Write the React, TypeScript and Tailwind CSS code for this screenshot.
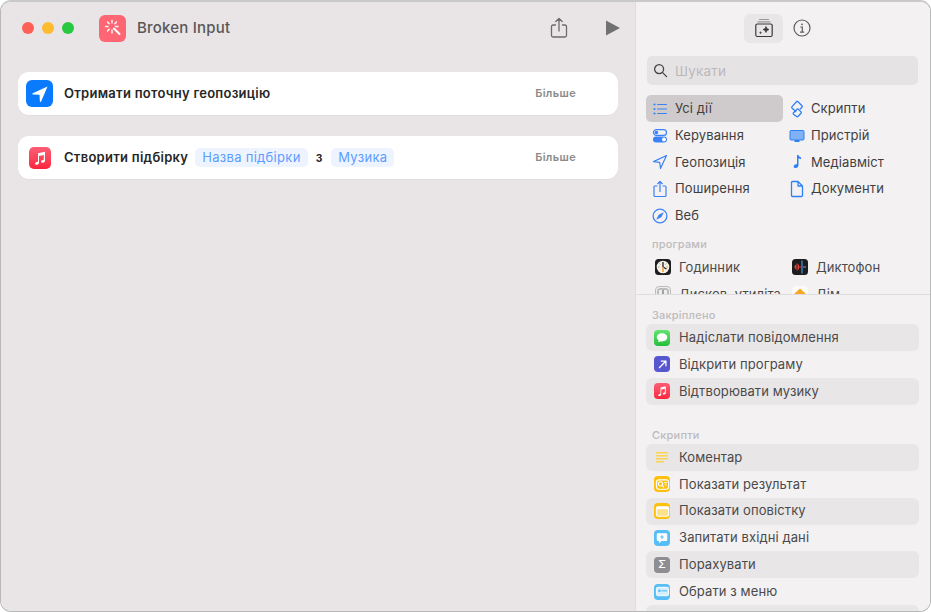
import React from "react";

const Arrow = ({ className = "", fill = "white" }: { className?: string; fill?: string }) => (
  <svg viewBox="0 0 16 16" className={className}><path d="M14 2 2.200 7.400c-.5.300-.4 1 .2 1L7.600 8.600l.3 5.200c0 .6.7.7 1 .2L14 2Z" fill={fill} /></svg>
);
const Note = ({ className = "", fill = "white" }: { className?: string; fill?: string }) => (
  <svg viewBox="0 0 16 16" className={className}><path d="M6 3.200 13 1.800v8.900c0 1.100-.8 1.800-2 2-1.100.2-1.900-.3-1.900-1.200 0-.9.7-1.400 1.800-1.600l.9-.2V4.900L7 5.900v6.800c0 1.100-.8 1.800-2 2-1.100.2-1.900-.3-1.900-1.200 0-.9.7-1.400 1.800-1.600l1.100-.2V3.200Z" fill={fill} /></svg>
);
const blue = "#3b82f6";

const cats: [string, React.ReactNode, string, React.ReactNode][] = [
  ["Усі дії",
    <svg viewBox="0 0 16 16" className="w-[16px] h-[16px]"><g fill={blue}><circle cx="2.500" cy="3.500" r="1.100"/><circle cx="2.500" cy="8" r="1.100"/><circle cx="2.500" cy="12.500" r="1.100"/><rect x="5" y="2.900" width="10" height="1.200" rx=".6"/><rect x="5" y="7.400" width="10" height="1.200" rx=".6"/><rect x="5" y="11.900" width="10" height="1.200" rx=".6"/></g></svg>,
    "Скрипти",
    <svg viewBox="0 0 16 18" className="w-[16px] h-[18px]" fill="none" stroke="#2f80f5" strokeWidth="1.300" strokeLinejoin="round"><path d="M8.200 1 3 6.600c-.4.400-.4 1 0 1.400l4.200 4M8.200 1l4.800 4.800c.4.400.4 1 0 1.400L11 9.200"/><path d="M4.500 12.800 8 9.300c.4-.4 1-.4 1.400 0l2.600 2.600c.4.400.4 1 0 1.400L9 16.500c-.4.400-1 .4-1.400 0l-3.100-2.300c-.4-.4-.4-1 0-1.400Z"/></svg>],
  ["Керування",
    <svg viewBox="0 0 16 16" className="w-[16px] h-[16px]"><rect x="1.500" y="1.600" width="13" height="5.800" rx="2.900" fill="none" stroke={blue} strokeWidth="1.200"/><circle cx="4.400" cy="4.500" r="1.800" fill={blue}/><rect x="1" y="8.600" width="14" height="6" rx="3" fill={blue}/><circle cx="12" cy="11.600" r="2" fill="white"/></svg>,
    "Пристрій",
    <svg viewBox="0 0 16 16" className="w-[16px] h-[16px]"><rect x="1" y="2.500" width="14" height="9.500" rx="1" fill="#7fb2f5" stroke="#2f80f5"/><rect x="5.500" y="12" width="5" height="2" fill="#2f80f5"/></svg>],
  ["Геопозиція",
    <svg viewBox="0 0 16 16" className="w-[16px] h-[16px]" fill="none" stroke={blue} strokeWidth="1.200" strokeLinejoin="round"><path d="M14.500 1.500 1.500 7.600l6.200.7.800 6.200 6-13Z"/></svg>,
    "Медіавміст",
    <svg viewBox="0 0 16 16" className="w-[16px] h-[16px]"><path d="M8 1h1.500c.3 1.500 1.200 2 2.500 2.200v1.800c-1 0-1.900-.3-2.500-.8v7.100c0 1.500-1.200 2.700-2.900 2.700-1.100 0-1.900-.7-1.900-1.600 0-1.200 1-2 2.600-2.200l.7-.1V1Z" fill="#2f80f5"/></svg>],
  ["Поширення",
    <svg viewBox="0 0 16 18" className="w-[16px] h-[18px]" fill="none" stroke={blue} strokeWidth="1.200" strokeLinecap="round" strokeLinejoin="round"><path d="M5 6H3a1 1 0 0 0-1 1v8.500a1 1 0 0 0 1 1h10a1 1 0 0 0 1-1V7a1 1 0 0 0-1-1h-2M8 11.500V1.500M5.700 3.700 8 1.500l2.300 2.200"/></svg>,
    "Документи",
    <svg viewBox="0 0 16 18" className="w-[16px] h-[18px]" fill="none" stroke="#2f80f5" strokeWidth="1.300" strokeLinejoin="round"><path d="M2.500 2.500a1 1 0 0 1 1-1h5.500l4.500 4.500v9.500a1 1 0 0 1-1 1h-9a1 1 0 0 1-1-1v-13.500ZM9 1.500v4.500h4.500"/></svg>],
  ["Веб",
    <svg viewBox="0 0 16 16" className="w-[16px] h-[16px]"><circle cx="8" cy="8" r="6.900" fill="none" stroke={blue} strokeWidth="1.300"/><path d="M11.800 4.200 9.300 9.300 4.200 11.800 6.700 6.700Z" fill={blue}/></svg>,
    "", null],
];

const Tile = ({ bg, children }: { bg: string; children: React.ReactNode }) => (
  <span className={`w-[16px] h-[16px] rounded-[4px] flex items-center justify-center shrink-0 ${bg}`}>{children}</span>
);

const IconMsg = <span className="w-[16px] h-[16px] rounded-[4px] flex items-center justify-center shrink-0 bg-gradient-to-b from-[#62e36c] to-[#1fbf3a]"><svg viewBox="0 0 16 16" className="w-[14px] h-[14px]"><path d="M8 2.500c3.400 0 6 2 6 4.700s-2.600 4.700-6 4.700c-.6 0-1.200 0-1.700-.2-.9.7-2 1-3 1 .6-.6 1-1.300 1-2C2.900 10 2 8.700 2 7.200 2 4.500 4.600 2.500 8 2.500Z" fill="white"/></svg></span>;
const IconOpen = <Tile bg="bg-[#5756ce]"><svg viewBox="0 0 16 16" className="w-[11px] h-[11px]" fill="none" stroke="white" strokeWidth="1.800"><path d="M3 13 13 3M5.500 3H13v7.500"/></svg></Tile>;
const IconMusic = <span className="w-[16px] h-[16px] rounded-[4px] flex items-center justify-center shrink-0 bg-gradient-to-b from-[#fb5c74] to-[#fa233b]"><Note className="w-[12px] h-[12px]" /></span>;
const IconComment = <span className="w-[16px] h-[16px] flex items-center justify-center shrink-0"><svg viewBox="0 0 16 16" className="w-[16px] h-[16px]"><g fill="#fcd34d"><rect x="2" y="2" width="12" height="1.500"/><rect x="2" y="5" width="12" height="1.500"/><rect x="2" y="8" width="12" height="1.500"/><rect x="2" y="11" width="8" height="1.500"/></g></svg></span>;
const IconResult = <Tile bg="bg-[#fdc00d]"><svg viewBox="0 0 16 16" className="w-[15px] h-[15px]" fill="none" stroke="white" strokeWidth="1.200"><rect x="1.500" y="3" width="13" height="10" rx="2.500"/><circle cx="5.800" cy="7.300" r="2.300"/><path d="M7.500 9 9.500 11M10 6h2.500M10.500 8.500h2"/></svg></Tile>;
const IconAlert = <Tile bg="bg-[#fdc00d]"><svg viewBox="0 0 16 16" className="w-[15px] h-[15px]"><rect x="1.500" y="3" width="13" height="10" rx="1.500" fill="#fde28a" stroke="white" strokeWidth="1.200"/><rect x="1.500" y="3" width="13" height="2.500" fill="white"/></svg></Tile>;
const IconAsk = <Tile bg="bg-[#56bdf5]"><svg viewBox="0 0 16 16" className="w-[14px] h-[14px]"><path d="M3.500 2.500h9a1.500 1.500 0 0 1 1.500 1.500v6a1.500 1.500 0 0 1-1.500 1.500H7.500L4.500 14v-2.500h-1A1.500 1.500 0 0 1 2 10V4a1.500 1.500 0 0 1 1.500-1.500Z" fill="white"/><path d="M8 4.800v4M6 6.800h4" stroke="#56bdf5" strokeWidth="1.200"/></svg></Tile>;
const IconCalc = <Tile bg="bg-[#8e8d92]"><span className="text-white text-[11px] leading-none font-medium">Σ</span></Tile>;
const IconMenu = <Tile bg="bg-[#56bdf5]"><svg viewBox="0 0 16 16" className="w-[15px] h-[15px]"><rect x="1.500" y="3.500" width="13" height="9" rx="1.500" fill="#d5efff" stroke="white"/><rect x="3.500" y="6" width="2.500" height="2.500" fill="#56bdf5"/><rect x="7" y="6.700" width="6" height="1.200" fill="#56bdf5"/></svg></Tile>;

const Clock = (
  <svg viewBox="0 0 16 16" className="w-[16px] h-[16px]"><rect width="16" height="16" rx="3.500" fill="#1d1d1f"/><circle cx="8" cy="8" r="6.300" fill="#f7f1e3"/><path d="M8 8V3M8 8l3.500 2" stroke="#222" strokeWidth="1.300"/><path d="M8 8v5" stroke="#f09a37" strokeWidth="1.500"/><path d="M3 8h1.500M11.500 8H13M4.500 4.500l1 1M11.500 4.500l-1 1" stroke="#888" strokeWidth=".8"/></svg>
);
const Memo = (
  <svg viewBox="0 0 16 16" className="w-[16px] h-[16px]"><rect width="16" height="16" rx="3.500" fill="#1d1d1f"/><path d="M2 8h1M3.500 6v4M5 4.500v7M6.500 5.500v5M8 7v2" stroke="#e0433a" strokeWidth="1"/><path d="M10 1.500v13" stroke="#3e9bf0" strokeWidth="1.200"/><path d="M11 8h3" stroke="#999" strokeWidth="1"/></svg>
);
const Disk = (
  <svg viewBox="0 0 16 16" className="w-[16px] h-[16px]"><rect x=".5" y=".5" width="15" height="15" rx="3.500" fill="#eeeeee" stroke="#bdbdbd"/><rect x="3" y="3" width="10" height="10" rx="1.500" fill="none" stroke="#8a8a8a"/><path d="M8 4v4" stroke="#555"/></svg>
);
const Home = (
  <svg viewBox="0 0 16 16" className="w-[16px] h-[16px]"><rect width="16" height="16" rx="3.500" fill="#fbfbfb"/><path d="M8 2.500 14 8h-1.800v5H3.800V8H2Z" fill="#f5a623"/></svg>
);

const Row = ({ icon, text, filled }: { icon: React.ReactNode; text: string; filled?: boolean }) => (
  <div className={`h-[26.800px] shrink-0 rounded-[6px] flex items-center gap-[9px] pl-[8px] ${filled ? "bg-[#e9e6e7]" : ""}`}>
    {icon}
    <span className="text-[13px] tracking-[0.1px] text-[#4a4a4a]">{text}</span>
  </div>
);

const Head = ({ children }: { children: React.ReactNode }) => (
  <div className="text-[11px] tracking-[0.2px] font-medium text-[#bdbbbc] pl-[6px] leading-[14px]">{children}</div>
);

export default function App() {
  return (
    <div className="w-[931px] h-[612px] bg-white [font-family:Inter,'Noto_Sans',sans-serif]">
      <div className="w-[931px] h-[612px] rounded-[11px] border border-[#b9b8b8] border-t-2 border-t-[#c9c9c9] overflow-hidden flex">
        {/* Left editor */}
        <div className="w-[635px] shrink-0 bg-[#e9e5e6] border-r border-[#dfdcdc] flex flex-col">
          <div className="h-[54px] shrink-0 flex items-center pb-[2px] pl-[21px] pr-[15px]">
            <div className="flex gap-[8px]">
              <span className="w-[12px] h-[12px] rounded-full bg-[#fe5f57]"></span>
              <span className="w-[12px] h-[12px] rounded-full bg-[#febb2e]"></span>
              <span className="w-[12px] h-[12px] rounded-full bg-[#28c840]"></span>
            </div>
            <div className="ml-[25px] w-[27px] h-[27px] rounded-[6px] bg-[#fe6673] flex items-center justify-center">
              <svg viewBox="0 0 20 20" className="w-[20px] h-[20px]" fill="none" stroke="white" strokeWidth="1.400" strokeLinecap="round">
                <path d="M9 2.500v2.500M9 12v3M2.500 8.500H5M12.500 8.500H15M4.500 4l1.700 1.700M13.500 4l-1.700 1.700M4.500 13l1.700-1.700" />
                <path d="M11 10.500 16.500 16" strokeWidth="2" />
              </svg>
            </div>
            <span className="ml-[11px] text-[15px] font-medium text-[#5a5758] tracking-[0.2px]">Broken Input</span>
            <div className="ml-auto flex items-center gap-[37px]">
              <svg viewBox="0 0 18 22" className="w-[18px] h-[22px] -translate-x-[1px]" fill="none" stroke="#6b6b6b" strokeWidth="1.300" strokeLinecap="round" strokeLinejoin="round">
                <path d="M5.500 8H3a1.500 1.500 0 0 0-1.500 1.500v9A1.500 1.500 0 0 0 3 20h12a1.500 1.500 0 0 0 1.500-1.500v-9A1.500 1.500 0 0 0 15 8h-2.500M9 14V1.500M5.800 4.500 9 1.500l3.200 3" />
              </svg>
              <svg viewBox="0 0 14 16" className="w-[14px] h-[16px]"><path d="M0 .5v15L14 8Z" fill="#717171" /></svg>
            </div>
          </div>
          <div className="pt-[16px] pl-[17px] pr-[17px] flex flex-col gap-[21px]">
            <div className="h-[43px] rounded-[11px] bg-white flex items-center pl-[8px] pr-[42px] shadow-[0_1px_1px_rgba(0,0,0,0.03)]">
              <span className="w-[27px] h-[27px] rounded-[6px] bg-[#0a7aff] flex items-center justify-center">
                <Arrow className="w-[20px] h-[20px]" />
              </span>
              <span className="ml-[11px] text-[13px] font-semibold text-[#262626] tracking-[0.27px]">Отримати поточну геопозицію</span>
              <span className="ml-auto text-[11px] font-semibold text-[#8b8b8b] tracking-[0.35px]">Більше</span>
            </div>
            <div className="h-[43px] rounded-[11px] bg-white flex items-center pl-[11px] pr-[42px] shadow-[0_1px_1px_rgba(0,0,0,0.03)]">
              <span className="w-[22px] h-[22px] rounded-[5px] bg-gradient-to-b from-[#fb5c74] to-[#fa233b] flex items-center justify-center">
                <Note className="w-[16px] h-[16px]" />
              </span>
              <span className="ml-[13px] text-[13px] font-semibold text-[#262626] tracking-[0.27px]">Створити підбірку</span>
              <span className="ml-[7px] h-[19px] px-[7px] rounded-[5px] bg-[#eef4ff] text-[#5c9dff] text-[13px] flex items-center tracking-[0.3px]">Назва підбірки</span>
              <span className="ml-[8px] text-[13px] font-semibold text-[#262626]">з</span>
              <span className="ml-[9px] h-[19px] px-[7px] rounded-[5px] bg-[#eef4ff] text-[#5c9dff] text-[13px] flex items-center tracking-[0.3px]">Музика</span>
              <span className="ml-auto text-[11px] font-semibold text-[#8b8b8b] tracking-[0.35px]">Більше</span>
            </div>
          </div>
        </div>
        {/* Right library */}
        <div className="flex-1 bg-[#f3f1f2] flex flex-col min-w-0">
          <div className="h-[293px] shrink-0 overflow-hidden border-b border-[#dedcdc] px-[10px]">
            <div className="h-[54px] flex items-center gap-[10px] pl-[98px] pb-[2px]">
              <span className="w-[39px] h-[29px] rounded-[6px] bg-[#e8e6e6] flex items-center justify-center">
                <svg viewBox="0 0 20 20" className="w-[20px] h-[20px]" fill="none" stroke="#3a3a3a" strokeWidth="1.200">
                  <path d="M5 1.500h10M3.500 3.800h13" stroke="#9a9a9a" />
                  <rect x="1.800" y="6" width="16.400" height="12.500" rx="1.500" />
                  <path d="M12 8.500l.9 2.100 2.100.9-2.100.9-.9 2.100-.9-2.100-2.100-.9 2.100-.9ZM6.500 13.500v2.500M5.300 14.700h2.500" fill="#3a3a3a" strokeWidth=".7" />
                </svg>
              </span>
              <svg viewBox="0 0 18 18" className="w-[18px] h-[18px]" fill="none" stroke="#5c5c5c" strokeWidth="1.200">
                <circle cx="9" cy="9" r="8" />
                <circle cx="9" cy="5.300" r=".9" fill="#5c5c5c" stroke="none" />
                <path d="M7.300 8h2v5M7 13.200h4.200" />
              </svg>
            </div>
            <div className="h-[29px] rounded-[5px] bg-[#e6e3e4] flex items-center pl-[6px] mx-[1px] w-[271px]">
              <svg viewBox="0 0 16 16" className="w-[15px] h-[15px]" fill="none" stroke="#444" strokeWidth="1.400"><circle cx="6.500" cy="6.500" r="4.800"/><path d="m10 10 4.500 4.500" strokeLinecap="round"/></svg>
              <span className="ml-[7px] pt-[1px] text-[13.500px] text-[#bcb9ba] tracking-[0.2px]">Шукати</span>
            </div>
            <div className="mt-[10.400px] grid grid-cols-[137px_1fr] auto-rows-[26.800px]">
              {cats.map(([a, ai, b, bi], i) => (
                <React.Fragment key={a}>
                  <div className={`h-[26.800px] rounded-[5px] flex items-center pl-[6px] gap-[7px] ${i === 0 ? "bg-[#cfcbcc]" : ""}`}>
                    <span className="w-[16px] flex justify-center">{ai}</span>
                    <span className="text-[13px] tracking-[0.1px] text-[#3f3f3f]">{a}</span>
                  </div>
                  <div className="flex items-center pl-[6px] gap-[6px]">
                    {bi && <span className="w-[16px] flex justify-center">{bi}</span>}
                    <span className="text-[13px] tracking-[0.1px] text-[#3f3f3f]">{b}</span>
                  </div>
                </React.Fragment>
              ))}
            </div>
            <div className="mt-[7.500px]"><Head>програми</Head></div>
            <div className="mt-[3px] grid grid-cols-[137px_1fr] auto-rows-[27px]">
              {[[Clock, "Годинник", Memo, "Диктофон"], [Disk, "Дисков. утиліта", Home, "Дім"]].map((r, i) => (
                <React.Fragment key={i}>
                  <div className="flex items-center pl-[9px] gap-[8px]">{r[0]}<span className="text-[13px] tracking-[0.1px] text-[#4a4a4a] whitespace-nowrap">{r[1]}</span></div>
                  <div className="flex items-center pl-[9px] gap-[8px]">{r[2]}<span className="text-[13px] tracking-[0.1px] text-[#4a4a4a]">{r[3]}</span></div>
                </React.Fragment>
              ))}
            </div>
          </div>
          <div className="flex-1 min-h-0 overflow-hidden pl-[10px] pr-[11px] pt-[13px] flex flex-col">
            <Head>Закріплено</Head>
            <div className="mt-[2.300px] flex flex-col">
              <Row icon={IconMsg} text="Надіслати повідомлення" filled />
              <Row icon={IconOpen} text="Відкрити програму" />
              <Row icon={IconMusic} text="Відтворювати музику" filled />
            </div>
            <div className="mt-[23px]"><Head>Скрипти</Head></div>
            <div className="mt-[2.500px] flex flex-col">
              <Row icon={IconComment} text="Коментар" filled />
              <Row icon={IconResult} text="Показати результат" />
              <Row icon={IconAlert} text="Показати оповістку" filled />
              <Row icon={IconAsk} text="Запитати вхідні дані" />
              <Row icon={IconCalc} text="Порахувати" filled />
              <Row icon={IconMenu} text="Обрати з меню" />
              <Row icon={<span />} text="" filled />
            </div>
          </div>
        </div>
      </div>
    </div>
  );
}
